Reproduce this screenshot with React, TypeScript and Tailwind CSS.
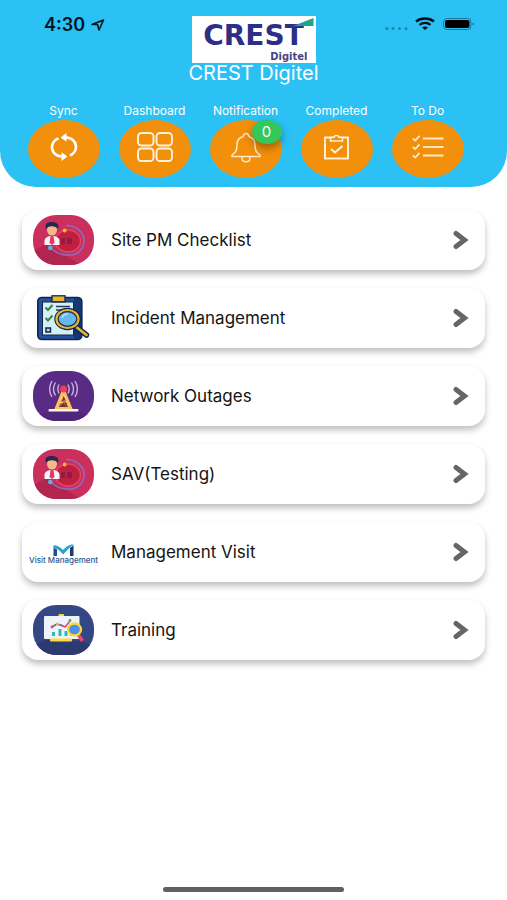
import React from 'react';

const SyncIcon = () => (
  <svg width="28" height="28" viewBox="0 0 28 28" fill="none" stroke="#fff" strokeWidth="2.6">
    <path d="M8.500 5.200C-1 9-.5 22 12 23.600" />
    <path d="M20 22.500C29 18.500 28 6 16 4.400" />
    <path d="M11.500 19.200l6 4.400-6 4.400zM16.500 0l-6 4.400 6 4.400z" fill="#fff" stroke="none" />
  </svg>
);

const DashboardIcon = () => (
  <svg width="36" height="30" viewBox="0 0 36 30" fill="none" stroke="#fff3dc" strokeWidth="1.9">
    <rect x="1" y="1" width="15.500" height="12.500" rx="3.500" />
    <rect x="19.500" y="1" width="15.500" height="12.500" rx="3.500" />
    <rect x="1" y="16.500" width="15.500" height="12.500" rx="3.500" />
    <rect x="19.500" y="16.500" width="15.500" height="12.500" rx="3.500" />
  </svg>
);

const BellIcon = () => (
  <svg width="30" height="31" viewBox="0 0 30 31" fill="none" stroke="#ffe9c4" strokeWidth="1.5" strokeLinejoin="round">
    <path d="M12.300 4.500C8 5.500 6 9 6 13c0 6-1.500 7.500-5 10v1.500h28V23c-3.500-2.500-5-4-5-10 0-4-2-7.500-6.300-8.500" />
    <path d="M12.300 4.600a2.700 3 0 1 1 5.400 0" />
    <path d="M11 24.500v1.500c0 5 8 5 8 0v-1.500" />
  </svg>
);

const CompletedIcon = () => (
  <svg width="25" height="25" viewBox="0 0 25 25" fill="none" stroke="#fff3dc" strokeWidth="1.900">
    <rect x="1" y="2.500" width="23" height="21" />
    <path d="M6.500 2.500v3.500h12v-3.500h-3.500a2.500 2 0 0 0-5 0z" fill="#f28f0b" strokeWidth="1.500" />
    <path d="M7 14l4 3.500 7.500-6.500" />
  </svg>
);

const TodoIcon = () => (
  <svg width="32" height="24" viewBox="0 0 32 24" fill="none" stroke="#ffe9c4">
    <path d="M11 3.500h20.500M11 12h20.500M11 20.500h20.500" strokeWidth="1.800" />
    <path d="M.7 3.500l2.500 2 4.300-4.700M.7 12l2.500 2 4.300-4.700M.7 20.500l2.500 2 4.300-4.700" strokeWidth="1.800" />
  </svg>
);

const ChecklistArt = () => (
  <svg width="61" height="50" viewBox="0 0 61 50" fill="none" className="rounded-[23px]">
    <rect width="61" height="50" fill="#cb2f5c" />
    <path d="M0 36l14-7 34 21H0z" fill="#b0264f" />
    <ellipse cx="35" cy="26" rx="12.500" ry="11" fill="#c0203f" stroke="#e04763" strokeWidth="1.500" />
    <path d="M33 10.500c11 0 18 7 18 15.500S44 41 34 40c-7 0-12-3-16-7" stroke="#8a6bc0" strokeWidth="1.700" />
    <path d="M28 23h4v6h-4zM34 23h5v6h-5z" fill="#8f1c42" />
    <path d="M11.500 30v-4c0-3 3-5 7.500-5s7.500 2 7.500 5v4z" fill="#f6f3fa" />
    <path d="M17.500 21h3l1 7-2.500 2-2.500-2z" fill="#e33a5d" />
    <ellipse cx="19" cy="15" rx="5" ry="5.500" fill="#f6b98c" />
    <path d="M13 14C11 8 15 7 19 7s8 2 6 7c-2-3-9-4-12 0z" fill="#272a50" />
    <circle cx="31.700" cy="15.500" r="1.900" fill="#ffad3b" />
    <circle cx="17.300" cy="33" r="2.300" fill="#52b8ea" />
  </svg>
);

const IncidentArt = () => (
  <svg width="53" height="46" viewBox="0 0 53 46" fill="none">
    <rect x=".8" y="2.500" width="44" height="42" rx="4" fill="#24519e" stroke="#10264d" strokeWidth="1.600" />
    <path d="M37 3h4c2 0 3 1 3 3v35c0 2-1 3-3 3h-4z" fill="#173674" />
    <rect x="5.500" y="7" width="31" height="33" fill="#d6eef5" stroke="#10264d" />
    <rect x="15" y=".8" width="13" height="6" fill="#e9b52f" stroke="#10264d" strokeWidth="1.300" />
    <path d="M8.500 12.500l2.500 2.500 4.500-5M8.500 23l2.500 2.500 4.500-5" stroke="#3b8146" strokeWidth="2" />
    <path d="M19 11.500h14M19 15h11" stroke="#243c59" strokeWidth="1.300" />
    <rect x="9" y="33" width="4.500" height="4" fill="#b9d7df" stroke="#10264d" strokeWidth="1.500" />
    <path d="M39 32l10.500 8" stroke="#10264d" strokeWidth="5.500" strokeLinecap="round" />
    <path d="M38 31l11.500 9" stroke="#e9b52f" strokeWidth="2.800" strokeLinecap="round" />
    <ellipse cx="30.500" cy="24" rx="11" ry="9" fill="#66b8ec" stroke="#10264d" strokeWidth="4.500" />
    <ellipse cx="30.500" cy="24" rx="11" ry="9" stroke="#e9b52f" strokeWidth="2.200" />
    <path d="M25 23c1-3 3-4 6-4" stroke="#b8e3f9" strokeWidth="1.300" />
  </svg>
);

const TowerArt = () => (
  <svg width="61" height="50" viewBox="0 0 61 50" fill="none" className="rounded-[23px]">
    <rect width="61" height="50" fill="#592b85" />
    <path d="M16 41h30l15 4v5H0v-4z" fill="#4f267a" />
    <g stroke="#cdb3da" strokeWidth="1.400">
      <path d="M19 10c-3 5-3 11 0 16M22.500 11.500c-2.500 4-2.500 9 0 13M26 13.500c-1.500 3-1.500 6 0 9" />
      <path d="M42 10c3 5 3 11 0 16M38.500 11.500c2.500 4 2.500 9 0 13M35 13.500c1.500 3 1.500 6 0 9" />
    </g>
    <path d="M29 19h3l8 20H21z" fill="#ffc15d" />
    <path d="M30.500 25l2 4-4 2zM27 33l6-2 2 5h-9z" fill="#6a3545" />
    <path d="M28.500 29l5 6M33 29l-6 6" stroke="#b66938" />
    <rect x="15.500" y="38" width="30" height="2.500" rx="1" fill="#fff0e8" />
    <circle cx="30.500" cy="18" r="3.500" fill="#ef3f56" />
  </svg>
);

const TrainingArt = () => (
  <svg width="61" height="50" viewBox="0 0 61 50" fill="none" className="rounded-[23px]">
    <rect width="61" height="50" fill="#354684" />
    <path d="M0 41l11-6 38 1 12 6v8H0z" fill="#2d3a72" />
    <rect x="25.500" y="9" width="5.500" height="4" rx="1" fill="#ffd63b" />
    <rect x="11" y="11" width="35.500" height="23" rx="1" fill="#eef3fb" />
    <rect x="17" y="33.500" width="22" height="3" rx="1" fill="#ffdb39" />
    <path d="M19 31v-4h3v4zM25.500 31v-7h3v7zM31.500 31v-5h3v5zM37 31v-7h3v7z" fill="#2eb9b3" />
    <path d="M19 22l5-3 6 2" stroke="#4476bc" strokeWidth="1.800" />
    <path d="M28 20l4 2 5-6" stroke="#ec4169" strokeWidth="1.600" />
    <circle cx="19" cy="22" r="1.400" fill="#ef4269" />
    <circle cx="24.500" cy="19" r="1.400" fill="#f9b731" />
    <circle cx="37" cy="15.500" r="1.400" fill="#45ae61" />
    <path d="M45.500 30l4 6" stroke="#f0476b" strokeWidth="3.500" />
    <ellipse cx="41.500" cy="24.500" rx="6.500" ry="6" fill="#4d90e9" stroke="#f8dc36" strokeWidth="2.300" />
  </svg>
);

const VisitArt = () => (
  <span className="flex flex-col items-center pt-1">
    <svg width="21" height="12" viewBox="0 0 21 12">
      <path d="M.5 3.500L4 5.500V12H.5z" fill="#1d4f91" />
      <path d="M17 4l3.500-3v11H17z" fill="#1c3a75" />
      <path d="M.5 1.500C3.500.5 7 3 10 6c3-3.500 6-5.500 10.500-6C17 3 14 7 10 10.500 7.500 7 4 4 .5 4z" fill="#2ba2cc" />
    </svg>
    <span className="whitespace-nowrap text-[8px] leading-[9px] font-medium text-[#2d5792]">Visit Management</span>
  </span>
);

const SHORTCUTS = [
  { label: 'Sync', icon: <SyncIcon /> },
  { label: 'Dashboard', icon: <DashboardIcon /> },
  { label: 'Notification', icon: <BellIcon />, count: 0 },
  { label: 'Completed', icon: <CompletedIcon /> },
  { label: 'To Do', icon: <TodoIcon /> },
];

const MODULES = [
  { name: 'Site PM Checklist', art: <ChecklistArt /> },
  { name: 'Incident Management', art: <IncidentArt /> },
  { name: 'Network Outages', art: <TowerArt /> },
  { name: 'SAV(Testing)', art: <ChecklistArt /> },
  { name: 'Management Visit', art: <VisitArt /> },
  { name: 'Training', art: <TrainingArt /> },
];

const StatusIcons = () => (
  <svg width="92" height="16" viewBox="0 0 92 16" fill="none">
    <g fill="#1a86ae">
      <circle cx="3" cy="12.500" r="1.500" />
      <circle cx="9" cy="12.500" r="1.500" />
      <circle cx="15.500" cy="12.500" r="1.500" />
      <circle cx="22" cy="12.500" r="1.500" />
    </g>
    <path d="M32 5.500c5-4 13-4 18 0M35.500 8.800c3-2.500 8-2.500 11 0" stroke="#001018" strokeWidth="2.300" />
    <path d="M38 11.500c2-1.500 4-1.500 6 0l-3 2.500z" fill="#001018" />
    <rect x="59.500" y="2.500" width="27.500" height="11" rx="3.500" stroke="#15799e" />
    <rect x="61" y="4" width="24.500" height="8" rx="2" fill="#000" />
    <path d="M88.500 6.500c2 .5 2 2.500 0 3z" fill="#15799e" />
  </svg>
);

const App = () => {
  return (
    <div className="min-h-screen flex flex-col bg-white font-['Inter','Liberation_Sans',sans-serif]">
      <header className="bg-[#2bc1f5] rounded-b-[36px] pt-4 pb-[9px]">
        <div className="grid grid-cols-3">
          <div className="flex items-start gap-1.5 pl-11 text-[#00151e]">
            <span className="text-[18px] leading-[18px] font-semibold">4:30</span>
            <svg width="14" height="14" viewBox="0 0 14 14" className="mt-0.5" fill="none" stroke="currentColor" strokeWidth="1.600" strokeLinejoin="round">
              <path d="M1 6.500L12.500 2 8 12l-1.500-5.500z" />
            </svg>
          </div>
          <div className="flex flex-col items-center">
            <div className="relative flex h-[47px] w-[124px] flex-col bg-white px-1 pt-1.5 font-['DejaVu_Sans',sans-serif] font-bold text-[#2c2f86]">
              <span className="text-center text-[28px] leading-7">CREST</span>
              <span className="pt-0.5 pr-1 text-right text-[10px] leading-[10px] text-[#4a4580]">Digitel</span>
              <svg width="21" height="8" viewBox="0 0 21 8" className="absolute top-0.5 right-0.5">
                <path d="M0 8L20.500 0v8z" fill="#1fa38d" />
              </svg>
            </div>
            <h1 className="whitespace-nowrap text-[20px] leading-5 text-white">CREST Digitel</h1>
          </div>
          <div className="flex items-start justify-end pr-[31px]">
            <StatusIcons />
          </div>
        </div>

        <nav className="mt-[21px] grid grid-cols-5 pl-[18px] pr-[34px]">
          {SHORTCUTS.map(s => (
            <button key={s.label} className="flex flex-col items-center gap-0.5 cursor-pointer">
              <span className="text-[12px] leading-3.5 text-white">{s.label}</span>
              <span className="relative flex h-[58px] w-[72px] items-center justify-center rounded-[50%] bg-[#f28f0b] pb-1">
                {s.icon}
                {s.count !== undefined && (
                  <span className="absolute top-0 right-0 flex h-6 w-[30px] items-center justify-center rounded-[50%] bg-[#34c75a] text-[15px] leading-5 text-white shadow-[0_4px_8px_rgba(0,0,0,0.35)]">
                    {s.count}
                  </span>
                )}
              </span>
            </button>
          ))}
        </nav>
      </header>

      <main className="flex flex-col gap-[18px] px-[22px] pt-[23px]">
        {MODULES.map(m => (
          <button key={m.name} className="flex w-full items-center gap-3 rounded-2xl bg-white py-[5px] pr-4 pl-1.5 text-left shadow-[0_4px_6px_rgba(0,0,0,0.25)] cursor-pointer">
            <span className="flex h-[50px] w-[71px] items-center justify-center">{m.art}</span>
            <span className="flex-1 text-[17px] leading-6 text-[#141414]">{m.name}</span>
            <svg width="16" height="20" viewBox="0 0 16 20" fill="none" stroke="#666" strokeWidth="5" strokeLinecap="round">
              <path d="M3 3.500l8.500 6.500L3 16.500" />
            </svg>
          </button>
        ))}
      </main>

      <footer className="mt-auto flex justify-center pt-6 pb-2">
        <span className="h-[5px] w-[181px] rounded-full bg-[#606060]" />
      </footer>
    </div>
  );
};

export default App;
